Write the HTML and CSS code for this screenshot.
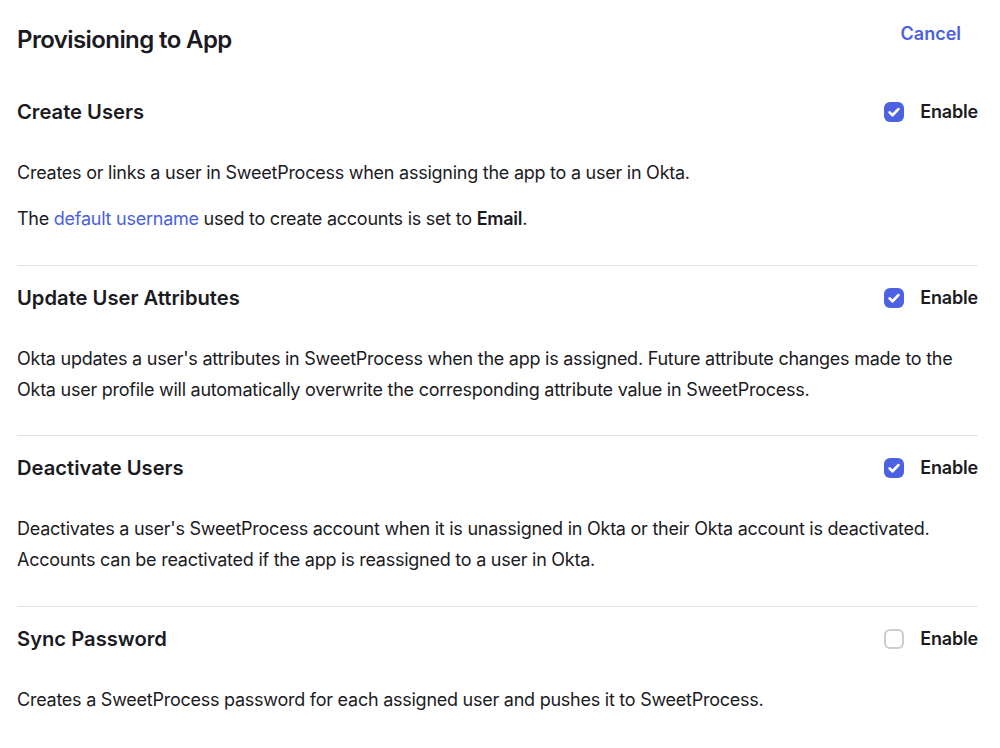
FILE: index.html
```html
<!DOCTYPE html>
<html lang="en">
<head>
<meta charset="utf-8">
<title>Provisioning to App</title>
<link rel="stylesheet" href="styles.css">
</head>
<body>
<div class="page">
  <header class="top">
    <h1 class="title">Provisioning to App</h1>
    <a class="cancel" href="#">Cancel</a>
  </header>

  <section class="section">
    <div class="row">
      <h2 class="heading">Create Users</h2>
      <label class="toggle"><span class="box checked"><svg viewBox="0 0 20 20" width="20" height="20"><path d="M5.6 10.4l2.9 2.9 5.9-6.2" fill="none" stroke="#fff" stroke-width="2.7" stroke-linecap="round" stroke-linejoin="round"/></svg></span><span class="enable">Enable</span></label>
    </div>
    <p class="desc">Creates or links a user in SweetProcess when assigning the app to a user in Okta.</p>
    <p class="desc next">The <a class="link" href="#">default username</a> used to create accounts is set to <b>Email</b>.</p>
  </section>

  <section class="section">
    <div class="row">
      <h2 class="heading">Update User Attributes</h2>
      <label class="toggle"><span class="box checked"><svg viewBox="0 0 20 20" width="20" height="20"><path d="M5.6 10.4l2.9 2.9 5.9-6.2" fill="none" stroke="#fff" stroke-width="2.7" stroke-linecap="round" stroke-linejoin="round"/></svg></span><span class="enable">Enable</span></label>
    </div>
    <p class="desc">Okta updates a user's attributes in SweetProcess when the app is assigned. Future attribute changes made to the Okta user profile will automatically overwrite the corresponding attribute value in SweetProcess.</p>
  </section>

  <section class="section">
    <div class="row">
      <h2 class="heading">Deactivate Users</h2>
      <label class="toggle"><span class="box checked"><svg viewBox="0 0 20 20" width="20" height="20"><path d="M5.6 10.4l2.9 2.9 5.9-6.2" fill="none" stroke="#fff" stroke-width="2.7" stroke-linecap="round" stroke-linejoin="round"/></svg></span><span class="enable">Enable</span></label>
    </div>
    <p class="desc">Deactivates a user's SweetProcess account when it is unassigned in Okta or their Okta account is deactivated. Accounts can be reactivated if the app is reassigned to a user in Okta.</p>
  </section>

  <section class="section last">
    <div class="row">
      <h2 class="heading">Sync Password</h2>
      <label class="toggle"><span class="box"></span><span class="enable">Enable</span></label>
    </div>
    <p class="desc">Creates a SweetProcess password for each assigned user and pushes it to SweetProcess.</p>
  </section>
</div>
</body>
</html>
```

FILE: styles.css
```css
* { box-sizing: border-box; }
html, body { margin: 0; padding: 0; background: #fff; }
body {
  font-family: Inter, "Noto Sans", "Liberation Sans", sans-serif;
  color: #1b1b1f;
}
.page {
  padding: 0 22px 0 17px;
}
.top {
  display: flex;
  justify-content: space-between;
  align-items: flex-start;
  height: 80px;
  padding-top: 25px;
}
.title {
  margin: 0;
  font-size: 24px;
  font-weight: 600;
  line-height: 30px;
  letter-spacing: -0.6px;
}
.cancel {
  margin-top: -6px;
  margin-right: 17px;
  color: #4b5fe0;
  font-size: 18px;
  font-weight: 600;
  line-height: 30px;
  text-decoration: none;
}
.section {
  padding: 17px 0 30.5px;
  border-bottom: 1px solid #e3e3e3;
}
.section.last { border-bottom: none; }
.row {
  display: flex;
  justify-content: space-between;
  align-items: center;
  height: 30px;
}
.heading {
  margin: 0;
  font-size: 20.2px;
  font-weight: 600;
  line-height: 30px;
}
.toggle {
  display: flex;
  align-items: center;
  gap: 16px;
}
.box {
  width: 20px;
  height: 20px;
  border-radius: 6px;
  border: 2px solid #cdcdcd;
  background: #fff;
  display: flex;
}
.box.checked {
  border: none;
  background: #4d61e3;
}
.enable {
  font-size: 18px;
  font-weight: 600;
  line-height: 30px;
  letter-spacing: -0.2px;
}
.desc {
  margin: 30px 0 0;
  font-size: 18px;
  line-height: 31px;
  letter-spacing: -0.25px;
}
.desc.next { margin-top: 15px; }
.desc b { font-weight: 600; }
.link {
  color: #4b5fe0;
  text-decoration: none;
}
```
